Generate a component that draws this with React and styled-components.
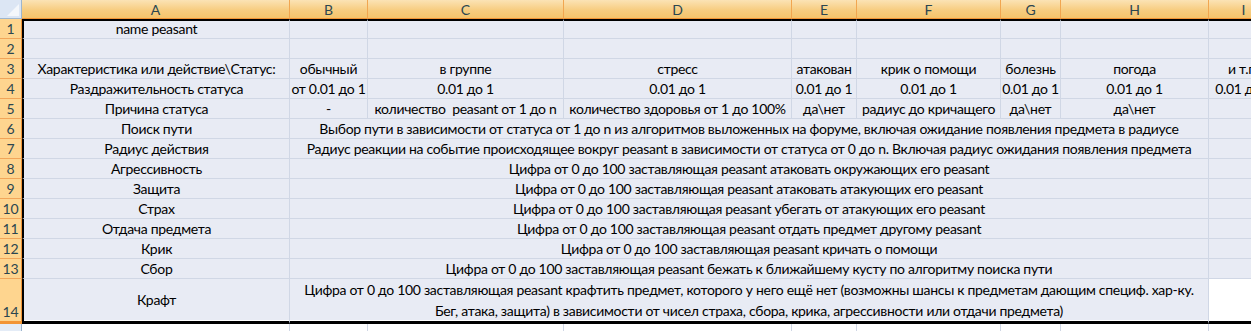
import styled, { createGlobalStyle } from 'styled-components'

const GlobalStyle = createGlobalStyle`
  html, body { margin: 0; padding: 0; background: #fff; overflow: hidden; }
  body { font-family: Lato, "Liberation Sans", sans-serif; }
`

const colWidths = [268, 78, 196, 228, 65, 144, 60, 148, 70]
const letters = ['A', 'B', 'C', 'D', 'E', 'F', 'G', 'H', 'I']

const row14 = (
    <>
        Цифра от 0 до 100 заставляющая peasant крафтить предмет, которого у него ещё нет (возможны шансы к предметам дающим специф. хар-ку.
        <br />
        Бег, атака, защита) в зависимости от чисел страха, сбора, крика, агрессивности или отдачи предмета)
    </>
)

// каждая строка: список ячеек, {t, span} для объединённых
const rows = [
    ['name peasant', '', '', '', '', '', '', '', ''],
    ['', '', '', '', '', '', '', '', ''],
    ['Характеристика или действие\\Статус:', 'обычный', 'в группе', 'стресс', 'атакован', 'крик о помощи', 'болезнь', 'погода', 'и т.п.'],
    ['Раздражительность статуса', 'от 0.01 до 1', '0.01 до 1', '0.01 до 1', '0.01 до 1', '0.01 до 1', '0.01 до 1', '0.01 до 1', '0.01 до 1'],
    ['Причина статуса', '-', 'количество  peasant от 1 до n', 'количество здоровья от 1 до 100%', 'да\\нет', 'радиус до кричащего', 'да\\нет', 'да\\нет', ''],
    ['Поиск пути', { t: 'Выбор пути в зависимости от статуса от 1 до n из алгоритмов выложенных на форуме, включая ожидание появления предмета в радиусе', span: 7 }, ''],
    ['Радиус действия', { t: 'Радиус реакции на событие происходящее вокруг peasant в зависимости от статуса от 0 до n. Включая радиус ожидания появления предмета', span: 7 }, ''],
    ['Агрессивность', { t: 'Цифра от 0 до 100 заставляющая peasant атаковать окружающих его peasant', span: 7 }, ''],
    ['Защита', { t: 'Цифра от 0 до 100 заставляющая peasant атаковать атакующих его peasant', span: 7 }, ''],
    ['Страх', { t: 'Цифра от 0 до 100 заставляющая peasant убегать от атакующих его peasant', span: 7 }, ''],
    ['Отдача предмета', { t: 'Цифра от 0 до 100 заставляющая peasant отдать предмет другому peasant', span: 7 }, ''],
    ['Крик', { t: 'Цифра от 0 до 100 заставляющая peasant кричать о помощи', span: 7 }, ''],
    ['Сбор', { t: 'Цифра от 0 до 100 заставляющая peasant бежать к ближайшему кусту по алгоритму поиска пути', span: 7 }, ''],
]

export default function App() {
    return (
        <>
            <GlobalStyle />
            <Sheet>
                <Corner><span /></Corner>
                {letters.map((l) => (
                    <ColHeader key={l}>{l}</ColHeader>
                ))}

                {rows.map((cells, i) => (
                    <Row key={i} n={i + 1} cells={cells} />
                ))}

                <RowHeader $last>14</RowHeader>
                <Cell $edge $last $valign="middle">Крафт</Cell>
                <Cell $last $span={7} $valign="top" $tall>{row14}</Cell>
                <Cell $last $blank />

                {/* следующая строка видна только краем */}
                <RowHeader $plain />
                {letters.map((l) => (
                    <Cell key={l} $blank />
                ))}
            </Sheet>
        </>
    )
}

function Row({ n, cells }) {
    return (
        <>
            <RowHeader>{n}</RowHeader>
            {cells.map((c, j) => {
                const cell = typeof c === 'string' ? { t: c } : c
                return (
                    <Cell key={j} $span={cell.span} $edge={j === 0} $first={n === 1}>
                        {cell.t}
                    </Cell>
                )
            })}
        </>
    )
}

const Sheet = styled.div`
    display: grid;
    grid-template-columns: 22px ${colWidths.map((w) => w + 'px').join(' ')};
    grid-template-rows: 19px repeat(13, 20px) 45px 20px;
    width: max-content;
    font-size: 14px;
    letter-spacing: -0.3px;
    color: #000;
`

const Corner = styled.div`
    box-sizing: border-box;
    position: relative;
    background: #dce6f4;
    border-right: 1px solid #9eb6ce;
    border-bottom: 1px solid #9eb6ce;

    span {
        position: absolute;
        right: 2px;
        bottom: 2px;
        width: 0;
        height: 0;
        border-left: 12px solid transparent;
        border-bottom: 12px solid #f4f7fb;
    }
`

const ColHeader = styled.div`
    box-sizing: border-box;
    display: flex;
    align-items: center;
    justify-content: center;
    background: linear-gradient(#fbe3b5, #f7cd81 55%, #f5c46b);
    border-right: 1px solid #f1a650;
    border-bottom: 1px solid #f29536;
    color: #2b4650;
    letter-spacing: 0;
`

const RowHeader = styled.div`
    box-sizing: border-box;
    display: flex;
    align-items: flex-end;
    justify-content: center;
    padding-bottom: 1px;
    background: ${(p) => (p.$plain ? '#e4ecf7' : '#fed58f')};
    border-right: 1px solid ${(p) => (p.$plain ? '#9eb6ce' : '#f29536')};
    border-bottom: 1px solid ${(p) => (p.$plain ? '#9eb6ce' : '#f2a65a')};
    color: #2b4650;
    line-height: 17px;
    letter-spacing: 0;
    ${(p) => p.$last && 'border-bottom: 3px solid #f29536;'}
`

const Cell = styled.div`
    box-sizing: border-box;
    grid-column: ${(p) => (p.$span ? `span ${p.$span}` : 'auto')};
    display: flex;
    flex-direction: column;
    justify-content: ${(p) => (p.$valign === 'top' ? 'flex-start' : p.$valign === 'middle' ? 'center' : 'flex-end')};
    align-items: center;
    text-align: center;
    overflow: hidden;
    white-space: pre;
    line-height: ${(p) => (p.$tall ? '21px' : '18px')};
    background: ${(p) => (p.$blank ? '#fff' : '#e8ebf4')};
    border-right: 1px solid #d0d7e5;
    border-bottom: ${(p) => (p.$last ? '3px solid #000' : '1px solid #d0d7e5')};
    border-top: ${(p) => (p.$first ? '2px solid #000' : '0')};
    border-left: ${(p) => (p.$edge ? '2px solid #000' : '0')};
    ${(p) => p.$last && !p.$blank && 'box-shadow: inset 0 -1px 0 #fff;'}
`
